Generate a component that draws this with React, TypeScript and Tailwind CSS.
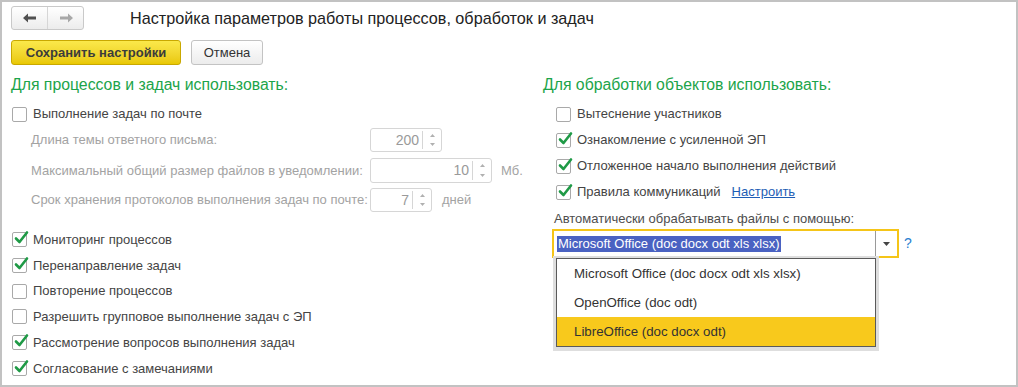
import React from "react";

const font = { fontFamily: '"Liberation Sans", Arial, sans-serif' };

function Check({ checked }: { checked?: boolean }) {
  return (
    <span className="relative inline-block w-[15px] h-[15px] shrink-0 rounded-[2px] border border-[#a9a9a9] bg-white">
      {checked && (
        <svg className="absolute left-[1px] top-[-3px]" width="15" height="15" viewBox="0 0 15 15">
          <path d="M2 8.5 L5.5 12 L13 2.5" fill="none" stroke="#1f9a46" strokeWidth="2.6" strokeLinecap="round" strokeLinejoin="round" />
        </svg>
      )}
    </span>
  );
}

function CheckRow({ label, checked, extra }: { label: string; checked?: boolean; extra?: React.ReactNode }) {
  return (
    <div className="flex items-center h-[26px] gap-[6px] text-[13px] text-[#444]">
      <Check checked={checked} />
      <span>{label}</span>
      {extra}
    </div>
  );
}

function Spin({ value, w, h }: { value: string; w: string; h: string }) {
  return (
    <div className={`flex ${w} ${h} rounded-[3px] border border-[#d6d6d6] bg-white`}>
      <div className="flex-1 flex items-center justify-end pr-[3px] text-[14px] text-[#9a9a9a]">{value}</div>
      <div className="w-[19px] flex flex-col border-l border-[#d6d6d6] my-[2px]">
        <div className="flex-1 flex items-center justify-center">
          <svg width="5" height="3" viewBox="0 0 5 3"><path d="M0 3 L2.5 0 L5 3Z" fill="#b0b0b0" /></svg>
        </div>
        <div className="flex-1 flex items-center justify-center">
          <svg width="5" height="3" viewBox="0 0 5 3"><path d="M0 0 L2.5 3 L5 0Z" fill="#b0b0b0" /></svg>
        </div>
      </div>
    </div>
  );
}

export default function App() {
  return (
    <div style={font} className="w-[1018px] h-[387px] bg-white border-2 border-[#c2c2c2] overflow-hidden">
      <div className="pl-[9px] pt-[4px]">
        {/* top bar */}
        <div className="flex items-center h-[24px]">
          <div className="flex w-[73px] h-[24px] rounded-[3px] border border-[#c9c9c9] bg-gradient-to-b from-white to-[#ececec]">
            <div className="flex-1 flex items-center justify-center border-r border-[#d6d6d6]">
              <svg width="14" height="10" viewBox="0 0 14 10">
                <path d="M0 5 L5 0.5 L5 3.5 L13 3.5 L13 6.5 L5 6.5 L5 9.5Z" fill="#505050" />
              </svg>
            </div>
            <div className="flex-1 flex items-center justify-center">
              <svg width="14" height="10" viewBox="0 0 14 10">
                <path d="M14 5 L9 0.5 L9 3.5 L1 3.5 L1 6.5 L9 6.5 L9 9.5Z" fill="#a8a8a8" />
              </svg>
            </div>
          </div>
          <div className="ml-[46px] text-[16.2px] text-[#222] leading-none">Настройка параметров работы процессов, обработок и задач</div>
        </div>
        <div className="flex items-center gap-[10px] mt-[10px]">
          <div className="flex items-center justify-center w-[170px] h-[25px] rounded-[3px] border border-[#c9a800] bg-gradient-to-b from-[#fbe94a] to-[#e9c800] text-[13px] font-bold text-[#3b3b3b]">
            Сохранить настройки
          </div>
          <div className="flex items-center justify-center w-[72px] h-[25px] rounded-[3px] border border-[#c3c3c3] bg-gradient-to-b from-white to-[#ececec] text-[13px] text-[#333]">
            Отмена
          </div>
        </div>

        <div className="flex mt-[10px]">
          {/* left column */}
          <div className="w-[532px] shrink-0">
            <div className="h-[20px] flex items-center text-[15.8px] text-[#1ca44a]">Для процессов и задач использовать:</div>
            <div className="mt-[6px] pl-[1px]">
              <CheckRow label="Выполнение задач по почте" />
            </div>
            <div className="pl-[20px] text-[13px] text-[#a3a3a3]">
              <div className="flex items-center h-[24px] mt-[1px]">
                <span className="w-[339px]">Длина темы ответного письма:</span>
                <Spin value="200" w="w-[72px]" h="h-[24px]" />
              </div>
              <div className="flex items-center h-[25px] mt-[6px]">
                <span className="w-[339px]">Максимальный общий размер файлов в уведомлении:</span>
                <Spin value="10" w="w-[122px]" h="h-[25px]" />
                <span className="ml-[9px]">Мб.</span>
              </div>
              <div className="flex items-center h-[24px] mt-[5px]">
                <span className="w-[339px]">Срок хранения протоколов выполнения задач по почте:</span>
                <Spin value="7" w="w-[62px]" h="h-[24px]" />
                <span className="ml-[10px]">дней</span>
              </div>
            </div>
            <div className="mt-[15px] pl-[1px] flex flex-col [&>div]:h-[25.7px]">
              <CheckRow label="Мониторинг процессов" checked />
              <CheckRow label="Перенаправление задач" checked />
              <CheckRow label="Повторение процессов" />
              <CheckRow label="Разрешить групповое выполнение задач с ЭП" />
              <CheckRow label="Рассмотрение вопросов выполнения задач" checked />
              <CheckRow label="Согласование с замечаниями" checked />
            </div>
          </div>

          {/* right column */}
          <div className="flex-1">
            <div className="h-[20px] flex items-center text-[15.8px] text-[#1ca44a]">Для обработки объектов использовать:</div>
            <div className="mt-[6px] pl-[13px]">
              <CheckRow label="Вытеснение участников" />
              <CheckRow label="Ознакомление с усиленной ЭП" checked />
              <CheckRow label="Отложенное начало выполнения действий" checked />
              <CheckRow
                label="Правила коммуникаций"
                checked
                extra={<span className="ml-[5px] text-[#1e5db5] underline">Настроить</span>}
              />
            </div>
            <div className="h-[20px] mt-[4px] pl-[11px] flex items-center text-[13px] text-[#4d4d4d]">
              Автоматически обрабатывать файлы с помощью:
            </div>
            <div className="relative pl-[9px] flex items-center">
              <div className="flex items-center w-[347px] h-[29px] border-2 border-[#f5c518] bg-white">
                <div className="flex-1 pl-[3px] flex items-center">
                  <span className="bg-[#4a62c2] text-white text-[13px] leading-[16px] px-[1px]">Microsoft Office (doc docx odt xls xlsx)</span>
                </div>
                <div className="w-[22px] h-[25px] border-l border-[#9a9a9a] flex items-center justify-center">
                  <svg width="7" height="4" viewBox="0 0 7 4"><path d="M0 0 L7 0 L3.5 4Z" fill="#444" /></svg>
                </div>
              </div>
              <span className="ml-[5px] text-[14px] text-[#2a7fd0]">?</span>
              <div className="absolute left-[13px] top-[29px] w-[320px] border border-[#5a5a5a] bg-white shadow-[0_1px_0_3px_#dedede] text-[13.3px] text-[#333]">
                <div className="h-[29px] flex items-center pl-[17px]">Microsoft Office (doc docx odt xls xlsx)</div>
                <div className="h-[29px] flex items-center pl-[17px]">OpenOffice (doc odt)</div>
                <div className="h-[29px] flex items-center pl-[17px] bg-[#f8c91c]">LibreOffice (doc docx odt)</div>
              </div>
            </div>
          </div>
        </div>
      </div>
    </div>
  );
}
